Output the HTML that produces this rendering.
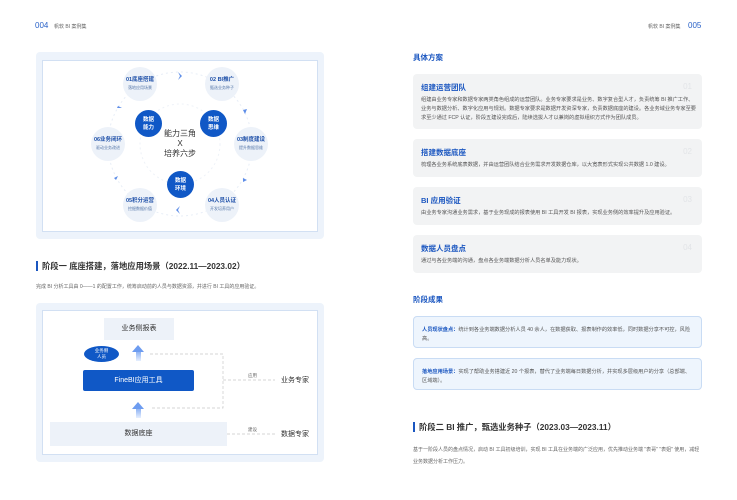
<!DOCTYPE html>
<html><head><meta charset="utf-8"><style>
*{margin:0;padding:0;box-sizing:border-box}
body{width:737px;height:500px;background:#fff;position:relative;overflow:hidden;font-family:"Liberation Sans","Noto Sans CJK SC",sans-serif;color:#333}
.a{position:absolute;white-space:nowrap}
.node{position:absolute;width:34px;height:34px;border-radius:50%;background:#edf2f9;text-align:center;font-size:5px;line-height:7px;padding-top:10px}
.node b{color:#1d4fa8;font-size:5.5px;display:block}
.node span{color:#5577aa;font-size:4px}
.dk{position:absolute;width:27px;height:27px;border-radius:50%;background:#1058c6;color:#fff;font-size:5.5px;font-weight:bold;text-align:center;line-height:8px;padding-top:6px}
.card{position:absolute;left:413px;width:289px;background:#f2f3f4;border-radius:4px}
.card h4{position:absolute;left:8px;top:8px;font-size:7.5px;color:#1a56c0;font-weight:bold}
.card p{position:absolute;left:8px;top:22px;width:275px;font-size:5.2px;color:#555;line-height:9px}
.card i{position:absolute;right:10px;top:8px;font-style:normal;font-size:8px;color:#e2e4e7}
.bc{position:absolute;left:413px;width:289px;background:#eef5fd;border:1px solid #c9dcf4;border-radius:4px;padding:9px 8px;font-size:5.2px;color:#555;line-height:8.5px}
.bc b{color:#1a56c0}
.ar{position:absolute;width:0;height:0;border-left:6px solid transparent;border-right:6px solid transparent;border-bottom:7px solid #6d9cf0}
.as{position:absolute;width:5px;height:9px;background:linear-gradient(#8fb3f3,#e6efff)}
</style></head><body>
<div class="a" style="left:35px;top:21px;font-size:8px;color:#2a62c8">004</div>
<div class="a" style="left:54px;top:23px;font-size:5px;color:#666">帆软 BI 案例集</div>
<div class="a" style="left:648px;top:23px;font-size:5px;color:#666">帆软 BI 案例集</div>
<div class="a" style="left:688px;top:21px;font-size:8px;color:#2a62c8">005</div>

<div class="a" style="left:36px;top:52px;width:288px;height:187px;background:#edf3fb;border-radius:4px"></div>
<div class="a" style="left:42px;top:60px;width:276px;height:172px;background:#fff;border:1px solid #d2e0f3"></div>
<svg class="a" style="left:0;top:0" width="368" height="250">
<circle cx="180" cy="144" r="72" fill="none" stroke="#e8eef7" stroke-width="1" stroke-dasharray="2 3"/>
<circle cx="180" cy="144" r="40" fill="none" stroke="#eef2f8" stroke-width="1" stroke-dasharray="2 3"/>
<g fill="#5f8ee8"><path d="M178 72l4 4-4 4 2-4z"/><path d="M243 110l4-1-2 5z"/><path d="M243 178l4 2-4 2z"/><path d="M180 214l-4-4 4-4-2 4z"/><path d="M114 178l4-2-2 4z"/><path d="M118 106l4 2-5 0z"/></g>
</svg>
<div class="node" style="left:123px;top:67px"><b>01底座搭建</b><span>落地应用场景</span></div>
<div class="node" style="left:205px;top:67px"><b>02 BI推广</b><span>甄选业务种子</span></div>
<div class="node" style="left:234px;top:127px"><b>03制度建设</b><span>提升数据思维</span></div>
<div class="node" style="left:205px;top:188px"><b>04人员认证</b><span>开发培养用户</span></div>
<div class="node" style="left:123px;top:188px"><b>05积分运营</b><span>挖掘数据价值</span></div>
<div class="node" style="left:91px;top:127px"><b>06业务闭环</b><span>驱动业务改进</span></div>
<div class="dk" style="left:135px;top:110px">数据<br>能力</div>
<div class="dk" style="left:200px;top:110px">数据<br>思维</div>
<div class="dk" style="left:167px;top:171px">数据<br>环境</div>
<div class="a" style="left:160px;top:129px;width:40px;text-align:center;font-size:8px;line-height:10px;color:#333">能力三角<br>X<br>培养六步</div>

<div class="a" style="left:36px;top:261px;width:2px;height:10px;background:#1a56c0"></div>
<div class="a" style="left:42px;top:260px;font-size:8.3px;font-weight:bold;color:#333">阶段一 底座搭建，落地应用场景（2022.11—2023.02）</div>
<div class="a" style="left:36px;top:283px;font-size:5px;color:#666">完成 BI 分析工具由 0——1 的配置工作，统筹启动前的人员与数据资源，并进行 BI 工具的应用验证。</div>

<div class="a" style="left:36px;top:303px;width:288px;height:159px;background:#edf3fb;border-radius:4px"></div>
<div class="a" style="left:42px;top:310px;width:276px;height:145px;background:#fff;border:1px solid #d2e0f3"></div>
<div class="a" style="left:104px;top:318px;width:70px;height:22px;background:#edf2f9;font-size:7px;text-align:center;line-height:22px">业务侧报表</div>
<div class="a" style="left:84px;top:346px;width:35px;height:16px;border-radius:50%;background:#1058c6;color:#fff;font-size:4.5px;text-align:center;line-height:6px;padding-top:2px">业务侧<br>人员</div>
<div class="ar" style="left:132px;top:345px"></div><div class="as" style="left:135.5px;top:352px"></div>
<div class="ar" style="left:132px;top:402px"></div><div class="as" style="left:135.5px;top:409px"></div>
<div class="a" style="left:83px;top:370px;width:111px;height:21px;background:#1058c6;border-radius:2px;color:#fff;font-size:7px;text-align:center;line-height:21px">FineBI应用工具</div>
<div class="a" style="left:50px;top:422px;width:177px;height:24px;background:#edf2f9;font-size:7px;text-align:center;line-height:24px">数据底座</div>
<svg class="a" style="left:0;top:300px" width="368" height="160">
<g fill="none" stroke="#c8c8c8" stroke-width="0.7" stroke-dasharray="3 2">
<path d="M150 54H223V108H150"/><path d="M223 80H275"/><path d="M227 134H275"/></g></svg>
<div class="a" style="left:248px;top:373px;font-size:4.5px;color:#666">应用</div>
<div class="a" style="left:248px;top:427px;font-size:4.5px;color:#666">建设</div>
<div class="a" style="left:281px;top:375px;font-size:7px">业务专家</div>
<div class="a" style="left:281px;top:429px;font-size:7px">数据专家</div>

<div class="a" style="left:413px;top:52px;font-size:7.5px;font-weight:bold;color:#1a56c0">具体方案</div>
<div class="card" style="top:74px;height:55px"><h4>组建运营团队</h4><i>01</i><p>组建由业务专家和数据专家两类角色组成的运营团队。业务专家要求是业务、数字复合型人才，负责统筹 BI 推广工作、业务与数据分析、数字化应用与规划。数据专家要求是数据开发资深专家，负责数据底座的建设。各业务域业务专家至要求至少通过 FCP 认证，阶段五建设完成后，陆续选拔人才以兼岗的虚拟组织方式作为团队成员。</p></div>
<div class="card" style="top:139px;height:38px"><h4>搭建数据底座</h4><i>02</i><p>梳理各业务系统底表数据，并由运营团队结合业务需求开发数据仓库，以大宽表形式实现公共数据 1.0 建设。</p></div>
<div class="card" style="top:187px;height:38px"><h4>BI 应用验证</h4><i>03</i><p>由业务专家沟通业务需求，基于业务现成的报表使用 BI 工具开发 BI 报表，实现业务侧的效率提升及应用验证。</p></div>
<div class="card" style="top:235px;height:38px"><h4>数据人员盘点</h4><i>04</i><p>通过与各业务端的沟通，盘点各业务端数据分析人员名单及能力现状。</p></div>

<div class="a" style="left:413px;top:294px;font-size:7.5px;font-weight:bold;color:#1a56c0">阶段成果</div>
<div class="bc" style="top:316px;height:32px"><b>人员现状盘点：</b>统计到各业务端数据分析人员 40 余人，在数据获取、报表制作的效率低，同时数据分享不可控，风险高。</div>
<div class="bc" style="top:358px;height:32px"><b>落地应用场景：</b>实现了帮助业务搭建近 20 个报表，替代了业务端每日数据分析，并实现多层级用户的分享（总部端、区域端）。</div>

<div class="a" style="left:413px;top:422px;width:2px;height:10px;background:#1a56c0"></div>
<div class="a" style="left:419px;top:421px;font-size:8.3px;font-weight:bold;color:#333">阶段二 BI 推广，甄选业务种子（2023.03—2023.11）</div>
<div class="a" style="left:413px;top:444px;font-size:5px;color:#666;line-height:12px;white-space:normal;width:290px">基于一阶段人员的盘点情况，启动 BI 工具初级培训，实现 BI 工具在业务端的广泛应用，优先推动业务端 "表哥" "表姐" 使用，减轻业务数据分析工作压力。</div>
</body></html>
